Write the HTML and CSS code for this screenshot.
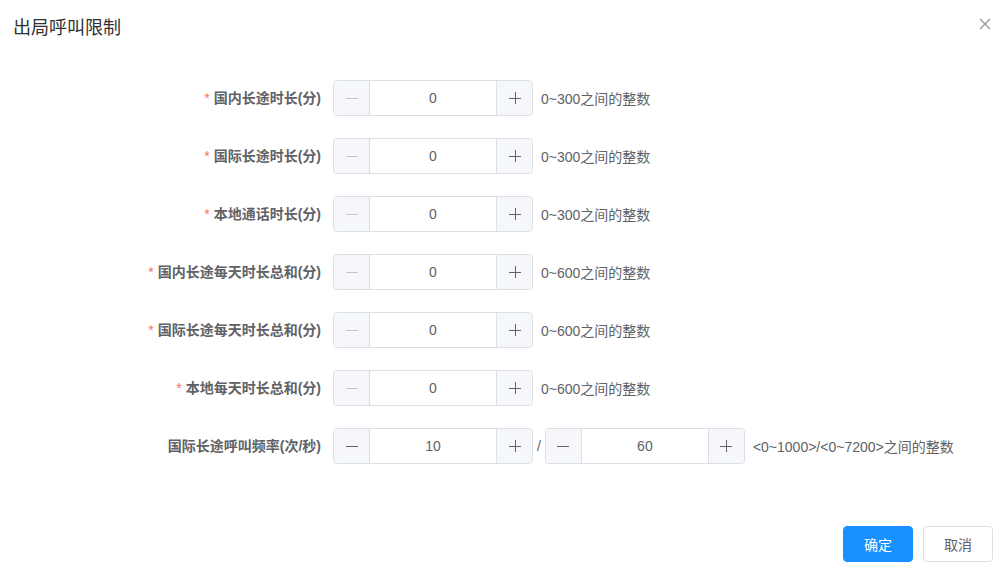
FILE: index.html
```html
<!DOCTYPE html>
<html lang="zh-CN">
<head>
<meta charset="utf-8">
<title>出局呼叫限制</title>
<link rel="stylesheet" href="styles.css">
</head>
<body>
<div class="dialog">
  <div class="header">
    <span class="title">出局呼叫限制</span>
    <span class="close"><svg width="12" height="12" viewBox="0 0 12 12"><path d="M1 1L11 11M11 1L1 11" stroke="#909399" stroke-width="1.2" fill="none"/></svg></span>
  </div>
  <div class="body">
    <div class="row">
      <label class="label req">国内长途时长(分)</label>
      <div class="control">
        <div class="num"><span class="btn dis"><svg width="12" height="12" viewBox="0 0 12 12"><path d="M0 6.5H12" stroke="currentColor"/></svg></span><span class="val">0</span><span class="btn plus"><svg width="12" height="12" viewBox="0 0 12 12"><path d="M0 6.5H12M6.5 0V12" stroke="currentColor"/></svg></span></div>
        <span class="hint">0~300之间的整数</span>
      </div>
    </div>
    <div class="row">
      <label class="label req">国际长途时长(分)</label>
      <div class="control">
        <div class="num"><span class="btn dis"><svg width="12" height="12" viewBox="0 0 12 12"><path d="M0 6.5H12" stroke="currentColor"/></svg></span><span class="val">0</span><span class="btn plus"><svg width="12" height="12" viewBox="0 0 12 12"><path d="M0 6.5H12M6.5 0V12" stroke="currentColor"/></svg></span></div>
        <span class="hint">0~300之间的整数</span>
      </div>
    </div>
    <div class="row">
      <label class="label req">本地通话时长(分)</label>
      <div class="control">
        <div class="num"><span class="btn dis"><svg width="12" height="12" viewBox="0 0 12 12"><path d="M0 6.5H12" stroke="currentColor"/></svg></span><span class="val">0</span><span class="btn plus"><svg width="12" height="12" viewBox="0 0 12 12"><path d="M0 6.5H12M6.5 0V12" stroke="currentColor"/></svg></span></div>
        <span class="hint">0~300之间的整数</span>
      </div>
    </div>
    <div class="row">
      <label class="label req">国内长途每天时长总和(分)</label>
      <div class="control">
        <div class="num"><span class="btn dis"><svg width="12" height="12" viewBox="0 0 12 12"><path d="M0 6.5H12" stroke="currentColor"/></svg></span><span class="val">0</span><span class="btn plus"><svg width="12" height="12" viewBox="0 0 12 12"><path d="M0 6.5H12M6.5 0V12" stroke="currentColor"/></svg></span></div>
        <span class="hint">0~600之间的整数</span>
      </div>
    </div>
    <div class="row">
      <label class="label req">国际长途每天时长总和(分)</label>
      <div class="control">
        <div class="num"><span class="btn dis"><svg width="12" height="12" viewBox="0 0 12 12"><path d="M0 6.5H12" stroke="currentColor"/></svg></span><span class="val">0</span><span class="btn plus"><svg width="12" height="12" viewBox="0 0 12 12"><path d="M0 6.5H12M6.5 0V12" stroke="currentColor"/></svg></span></div>
        <span class="hint">0~600之间的整数</span>
      </div>
    </div>
    <div class="row">
      <label class="label req">本地每天时长总和(分)</label>
      <div class="control">
        <div class="num"><span class="btn dis"><svg width="12" height="12" viewBox="0 0 12 12"><path d="M0 6.5H12" stroke="currentColor"/></svg></span><span class="val">0</span><span class="btn plus"><svg width="12" height="12" viewBox="0 0 12 12"><path d="M0 6.5H12M6.5 0V12" stroke="currentColor"/></svg></span></div>
        <span class="hint">0~600之间的整数</span>
      </div>
    </div>
    <div class="row">
      <label class="label">国际长途呼叫频率(次/秒)</label>
      <div class="control">
        <div class="num"><span class="btn"><svg width="12" height="12" viewBox="0 0 12 12"><path d="M0 6.5H12" stroke="currentColor"/></svg></span><span class="val">10</span><span class="btn plus"><svg width="12" height="12" viewBox="0 0 12 12"><path d="M0 6.5H12M6.5 0V12" stroke="currentColor"/></svg></span></div>
        <span class="slash">/</span>
        <div class="num"><span class="btn"><svg width="12" height="12" viewBox="0 0 12 12"><path d="M0 6.5H12" stroke="currentColor"/></svg></span><span class="val">60</span><span class="btn plus"><svg width="12" height="12" viewBox="0 0 12 12"><path d="M0 6.5H12M6.5 0V12" stroke="currentColor"/></svg></span></div>
        <span class="hint">&lt;0~1000&gt;/&lt;0~7200&gt;之间的整数</span>
      </div>
    </div>
  </div>
  <div class="footer">
    <button class="button primary">确定</button>
    <button class="button">取消</button>
  </div>
</div>
</body>
</html>
```

FILE: styles.css
```css
* { box-sizing: border-box; }
html, body {
  margin: 0;
  padding: 0;
  background: #fff;
}
body {
  font-family: "Liberation Sans", Arial, "Noto Sans CJK SC", sans-serif;
  color: #606266;
  width: 1000px;
  height: 570px;
  overflow: hidden;
}
.dialog {
  width: 1000px;
}
.header {
  display: flex;
  justify-content: space-between;
  align-items: flex-start;
  padding: 16px 9px 0 13px;
}
.title {
  font-size: 18px;
  line-height: 24px;
  color: #303133;
}
.close {
  display: block;
  width: 12px;
  height: 12px;
  margin-top: 2px;
}
.close svg { display: block; }
.body {
  padding-top: 40px;
  display: flex;
  flex-direction: column;
  gap: 22px;
}
.row {
  display: grid;
  grid-template-columns: 333px auto;
  height: 36px;
}
.label {
  text-align: right;
  padding-right: 12px;
  font-size: 14px;
  font-weight: bold;
  line-height: 36px;
  color: #606266;
}
.label.req::before {
  content: "*";
  color: #f56c6c;
  margin-right: 4px;
  font-weight: normal;
}
.control {
  display: flex;
  align-items: center;
}
.num {
  display: flex;
  width: 200px;
  height: 36px;
  border: 1px solid #dcdfe6;
  border-radius: 4px;
  overflow: hidden;
  background: #fff;
}
.btn {
  width: 36px;
  flex: none;
  display: flex;
  align-items: center;
  justify-content: center;
  background: #f5f7fa;
  color: #606266;
  border-right: 1px solid #dcdfe6;
}
.btn.plus {
  border-right: none;
  border-left: 1px solid #dcdfe6;
}
.btn.dis { color: #c0c4cc; }
.btn svg { display: block; }
.val {
  flex: 1;
  text-align: center;
  font-size: 14px;
  line-height: 34px;
  color: #606266;
}
.slash {
  font-size: 14px;
  margin: 0 4px;
  color: #606266;
}
.hint {
  margin-left: 8px;
  font-size: 14px;
  color: #606266;
}
.footer {
  display: flex;
  justify-content: flex-end;
  gap: 10px;
  padding: 62px 7px 0 0;
}
.button {
  width: 70px;
  height: 36px;
  border: 1px solid #dcdfe6;
  border-radius: 4px;
  background: #fff;
  color: #606266;
  font-family: "Liberation Sans", Arial, "Noto Sans CJK SC", sans-serif;
  font-size: 14px;
  padding: 0;
}
.button.primary {
  background: #1890ff;
  border-color: #1890ff;
  color: #fff;
}
```
